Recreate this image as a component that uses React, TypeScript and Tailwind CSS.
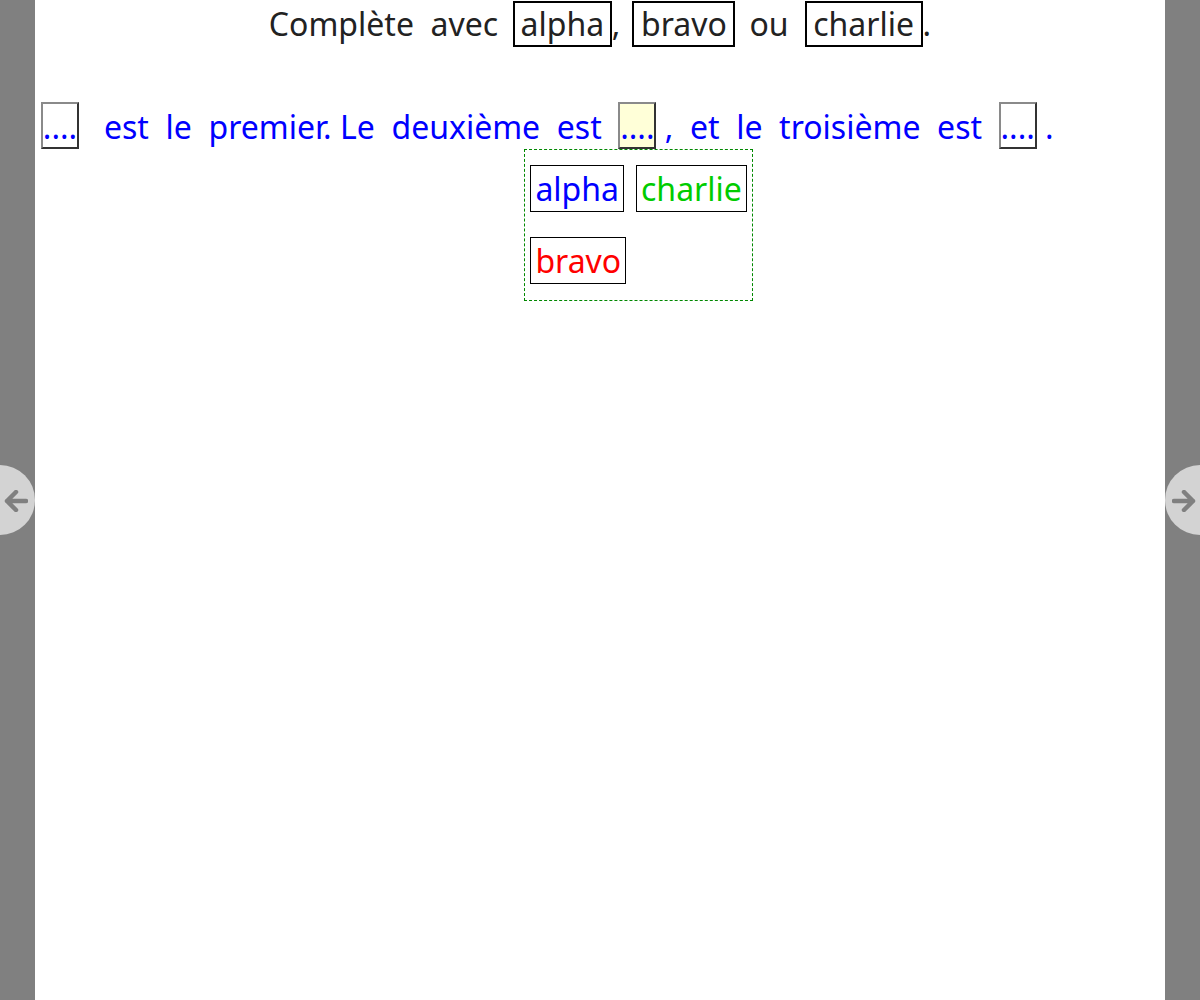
import React from 'react';

const font = { fontFamily: '"Noto Sans", "Open Sans", sans-serif' };

// petite case vide avec bordure en relief
const Blank = ({ active, className = '' }: { active?: boolean; className?: string }) => (
    <span
        className={`inline-flex h-[47px] w-[38px] items-end justify-center border-2 border-t-[#8a8a8a] border-l-[#8a8a8a] border-b-[#333] border-r-[#333] pb-[4px] leading-none text-[#0000ff] ${active ? 'bg-[#ffffd8]' : 'bg-white'} ${className}`}
    >
        ....
    </span>
);

const WordBox = ({ children, className = '' }: { children: React.ReactNode; className?: string }) => (
    <span className={`inline-flex h-[46px] items-center justify-center border-2 border-black leading-none ${className}`}>
        {children}
    </span>
);

const Choice = ({ label, color }: { label: string; color: string }) => (
    <span className={`inline-flex h-[47px] items-center border border-black px-[4px] text-[32px] leading-none ${color}`}>
        {label}
    </span>
);

const SideArrow = ({ side }: { side: 'left' | 'right' }) => (
    <div
        className={`absolute top-[465px] h-[70px] w-[70px] rounded-full bg-[#d3d3d3] ${side === 'left' ? 'left-[-35px]' : 'right-[-35px]'}`}
    >
        <svg
            width="24"
            height="22"
            viewBox="0 0 24 22"
            className={`absolute top-[25px] ${side === 'left' ? 'left-[39px]' : 'left-[7px] rotate-180'}`}
        >
            <path d="M3 11 H22 M12 2 L3 11 L12 20" fill="none" stroke="#808080" strokeWidth="4.5" strokeLinecap="round" strokeLinejoin="round" />
        </svg>
    </div>
);

export default function App() {
    return (
        <div className="relative flex h-[1000px] w-full overflow-hidden bg-[#808080]" style={font}>
            <div className="w-[35px] shrink-0" />
            <div className="relative flex-1 bg-white">
                {/* consigne */}
                <div className="flex h-[47px] items-center justify-center whitespace-pre pt-[1px] text-[32px] leading-none text-[#222]">
                    <span>Complète  avec  </span>
                    <WordBox className="ml-[-2px] w-[99px]">alpha</WordBox>
                    <span>,</span>
                    <WordBox className="ml-[12px] w-[103px]">bravo</WordBox>
                    <span className="ml-[14px]">ou</span>
                    <WordBox className="ml-[16px] w-[118px]">charlie</WordBox>
                    <span>.</span>
                </div>

                {/* phrase à compléter */}
                <div className="mt-[55px] flex items-end whitespace-pre pl-[6px] text-[32px] leading-none text-[#0000ff]">
                    <Blank />
                    <span className="mb-[6px]">   est  le  premier. Le  deuxième  est  </span>
                    <span className="relative">
                        <Blank active />
                        {/* liste des choix */}
                        <div className="absolute left-[-94px] top-[47px] flex w-[229px] flex-wrap gap-x-[12px] gap-y-[25px] border border-dashed border-[#008800] bg-white px-[5px] pb-[16px] pt-[15px]">
                            <Choice label="alpha" color="text-[#0000ff]" />
                            <Choice label="charlie" color="text-[#00cc00]" />
                            <Choice label="bravo" color="text-[#ff0000]" />
                        </div>
                    </span>
                    <span className="mb-[6px]"> ,  et  le  troisième  est  </span>
                    <Blank />
                    <span className="mb-[6px]"> .</span>
                </div>
            </div>
            <div className="w-[35px] shrink-0" />
            <SideArrow side="left" />
            <SideArrow side="right" />
        </div>
    );
}
